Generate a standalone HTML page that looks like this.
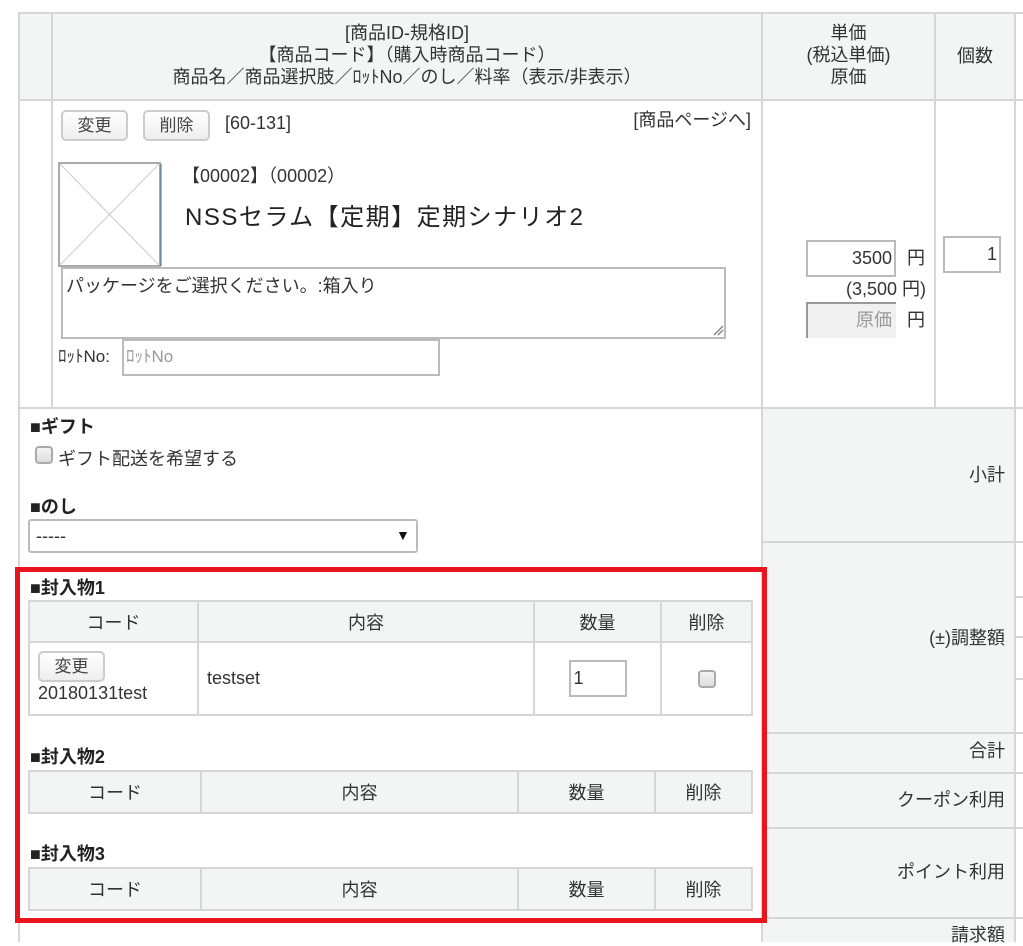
<!DOCTYPE html>
<html><head><meta charset="utf-8"><style>
*{margin:0;padding:0;box-sizing:border-box}
body{width:1023px;height:942px;overflow:hidden;background:#fff;position:relative;font-family:"Liberation Sans","Noto Sans CJK JP",sans-serif;font-size:18px;color:#333}
.a{position:absolute}
.vl{position:absolute;width:2px;background:#d6d6d6}
.hl{position:absolute;height:2px;background:#d6d6d6}
.t{position:absolute;white-space:nowrap;line-height:22px}
.btn{position:absolute;border:2px solid #ccc;border-radius:5px;background:linear-gradient(#fff,#eee);font-size:17px;text-align:center;color:#444}
.inp{position:absolute;border:2px solid #bbb;background:#fff}
.g{background:#f3f4f4}
.b{font-weight:bold;color:#222}
table{position:absolute;border-collapse:collapse;font-size:18px}
td{border:2px solid #d6d6d6;text-align:center}
.hd td{background:#f3f4f4}
.cb{position:absolute;width:18px;height:18px;border:2px solid #aaa;border-radius:4px;background:linear-gradient(#f4f4f4,#ddd)}
</style></head><body>
<div class="a g" style="left:19px;top:13px;width:996px;height:87px"></div>
<div class="a g" style="left:762px;top:408px;width:253px;height:534px"></div>
<div class="hl" style="left:19px;top:12px;width:1004px"></div>
<div class="hl" style="left:19px;top:99px;width:1004px"></div>
<div class="hl" style="left:19px;top:407px;width:1004px"></div>
<div class="vl" style="left:18px;top:12px;height:930px"></div>
<div class="vl" style="left:51px;top:12px;height:396px"></div>
<div class="vl" style="left:761px;top:12px;height:930px"></div>
<div class="vl" style="left:934px;top:12px;height:396px"></div>
<div class="vl" style="left:1014px;top:12px;height:930px"></div>
<div class="hl" style="left:762px;top:541px;width:261px"></div>
<div class="hl" style="left:762px;top:732px;width:261px"></div>
<div class="hl" style="left:762px;top:772px;width:261px"></div>
<div class="hl" style="left:762px;top:827px;width:261px"></div>
<div class="hl" style="left:762px;top:917px;width:261px"></div>
<div class="hl" style="left:1015px;top:596px;width:8px"></div>
<div class="hl" style="left:1015px;top:636px;width:8px"></div>
<div class="hl" style="left:1015px;top:678px;width:8px"></div>
<div class="t" style="left:52px;width:710px;top:22px;text-align:center;line-height:22px">[商品ID-規格ID]<br>【商品コード】（購入時商品コード）<br>商品名／商品選択肢／ﾛｯﾄNo／のし／料率（表示/非表示）</div>
<div class="t" style="left:762px;width:173px;top:22px;text-align:center">単価<br>(税込単価)<br>原価</div>
<div class="t" style="left:935px;width:80px;top:45px;text-align:center">個数</div>
<div class="btn" style="left:61px;top:110px;width:67px;height:31px;line-height:27px">変更</div>
<div class="btn" style="left:143px;top:110px;width:67px;height:31px;line-height:27px">削除</div>
<div class="t" style="left:225px;top:112px">[60-131]</div>
<div class="t" style="left:600px;width:151px;top:109px;text-align:right">[商品ページへ]</div>
<svg class="a" style="left:58px;top:162px" width="104" height="106"><rect x="1" y="1" width="101" height="103" fill="#fff" stroke="#aaa" stroke-width="2"/><line x1="2" y1="2" x2="101" y2="103" stroke="#ccc"/><line x1="101" y1="2" x2="2" y2="103" stroke="#ccc"/><line x1="103" y1="2" x2="103" y2="104" stroke="#3a6a8a" stroke-width="1"/></svg>
<div class="t" style="left:182px;top:165px">【00002】（00002）</div>
<div class="t" style="left:185px;top:205px;font-size:24px;line-height:26px;color:#222;letter-spacing:1.5px">NSSセラム【定期】定期シナリオ2</div>
<div class="inp" style="left:61px;top:267px;width:665px;height:72px"></div>
<div class="t" style="left:66px;top:275px">パッケージをご選択ください。:箱入り</div>
<svg class="a" style="left:712px;top:324px" width="12" height="12"><path d="M2 11L11 2M6 11L11 6" stroke="#888" stroke-width="1.5"/></svg>
<div class="t" style="left:58px;top:346px;font-size:17px">ﾛｯﾄNo:</div>
<div class="inp" style="left:122px;top:339px;width:318px;height:37px"></div>
<div class="t" style="left:126px;top:346px;font-size:17px;color:#999">ﾛｯﾄNo</div>
<div class="inp" style="left:806px;top:240px;width:90px;height:37px"></div>
<div class="t" style="left:806px;width:86px;top:247px;text-align:right">3500</div>
<div class="t" style="left:907px;top:247px">円</div>
<div class="t" style="left:800px;width:126px;top:278px;text-align:right">(3,500 円)</div>
<div class="a" style="left:806px;top:302px;width:90px;height:36px;background:#f0f0f0;border-left:2px solid #999;border-top:2px solid #999"></div>
<div class="t" style="left:806px;width:86px;top:309px;text-align:right;color:#999">原価</div>
<div class="t" style="left:907px;top:309px">円</div>
<div class="inp" style="left:943px;top:236px;width:58px;height:37px"></div>
<div class="t" style="left:943px;width:54px;top:243px;text-align:right">1</div>
<div class="t b" style="left:30px;top:416px">■ギフト</div>
<div class="cb" style="left:35px;top:446px"></div>
<div class="t" style="left:58px;top:448px">ギフト配送を希望する</div>
<div class="t b" style="left:30px;top:496px">■のし</div>
<div class="a" style="left:28px;top:519px;width:390px;height:34px;border:2px solid #bbb;border-radius:3px;background:#fff"></div>
<div class="t" style="left:36px;top:525px">-----</div>
<div class="t" style="left:396px;top:524px;font-size:14px;color:#111">▼</div>
<div class="a" style="left:15px;top:567px;width:752px;height:356px;border:5px solid #e8141e"></div>
<div class="t b" style="left:30px;top:577px">■封入物1</div>
<table style="left:28px;top:600px;width:725px">
<tr class="hd" style="height:41px"><td style="width:169px">コード</td><td style="width:336px">内容</td><td style="width:127px">数量</td><td>削除</td></tr>
<tr style="height:73px"><td style="text-align:left;padding-left:8px;vertical-align:top;padding-top:8px"><div style="width:67px;height:31px;border:2px solid #ccc;border-radius:5px;background:linear-gradient(#fff,#eee);font-size:17px;text-align:center;line-height:27px;color:#444">変更</div><div style="line-height:22px;color:#333">20180131test</div></td><td style="text-align:left;padding-left:8px">testset</td><td><div style="display:inline-block;width:58px;height:37px;border:2px solid #bbb;text-align:left;padding-left:3px;line-height:33px">1</div></td><td><div style="display:inline-block;width:18px;height:18px;border:2px solid #aaa;border-radius:4px;background:linear-gradient(#f4f4f4,#ddd);vertical-align:middle"></div></td></tr>
</table>
<div class="t b" style="left:30px;top:746px">■封入物2</div>
<table style="left:28px;top:770px;width:725px">
<tr class="hd" style="height:42px"><td style="width:172px">コード</td><td style="width:317px">内容</td><td style="width:137px">数量</td><td>削除</td></tr></table>
<div class="t b" style="left:30px;top:843px">■封入物3</div>
<table style="left:28px;top:867px;width:725px">
<tr class="hd" style="height:42px"><td style="width:172px">コード</td><td style="width:317px">内容</td><td style="width:137px">数量</td><td>削除</td></tr></table>
<div class="t" style="left:770px;width:235px;top:464px;text-align:right">小計</div>
<div class="t" style="left:770px;width:235px;top:627px;text-align:right">(±)調整額</div>
<div class="t" style="left:770px;width:235px;top:740px;text-align:right">合計</div>
<div class="t" style="left:770px;width:235px;top:789px;text-align:right">クーポン利用</div>
<div class="t" style="left:770px;width:235px;top:861px;text-align:right">ポイント利用</div>
<div class="t" style="left:770px;width:235px;top:924px;text-align:right">請求額</div>
</body></html>
